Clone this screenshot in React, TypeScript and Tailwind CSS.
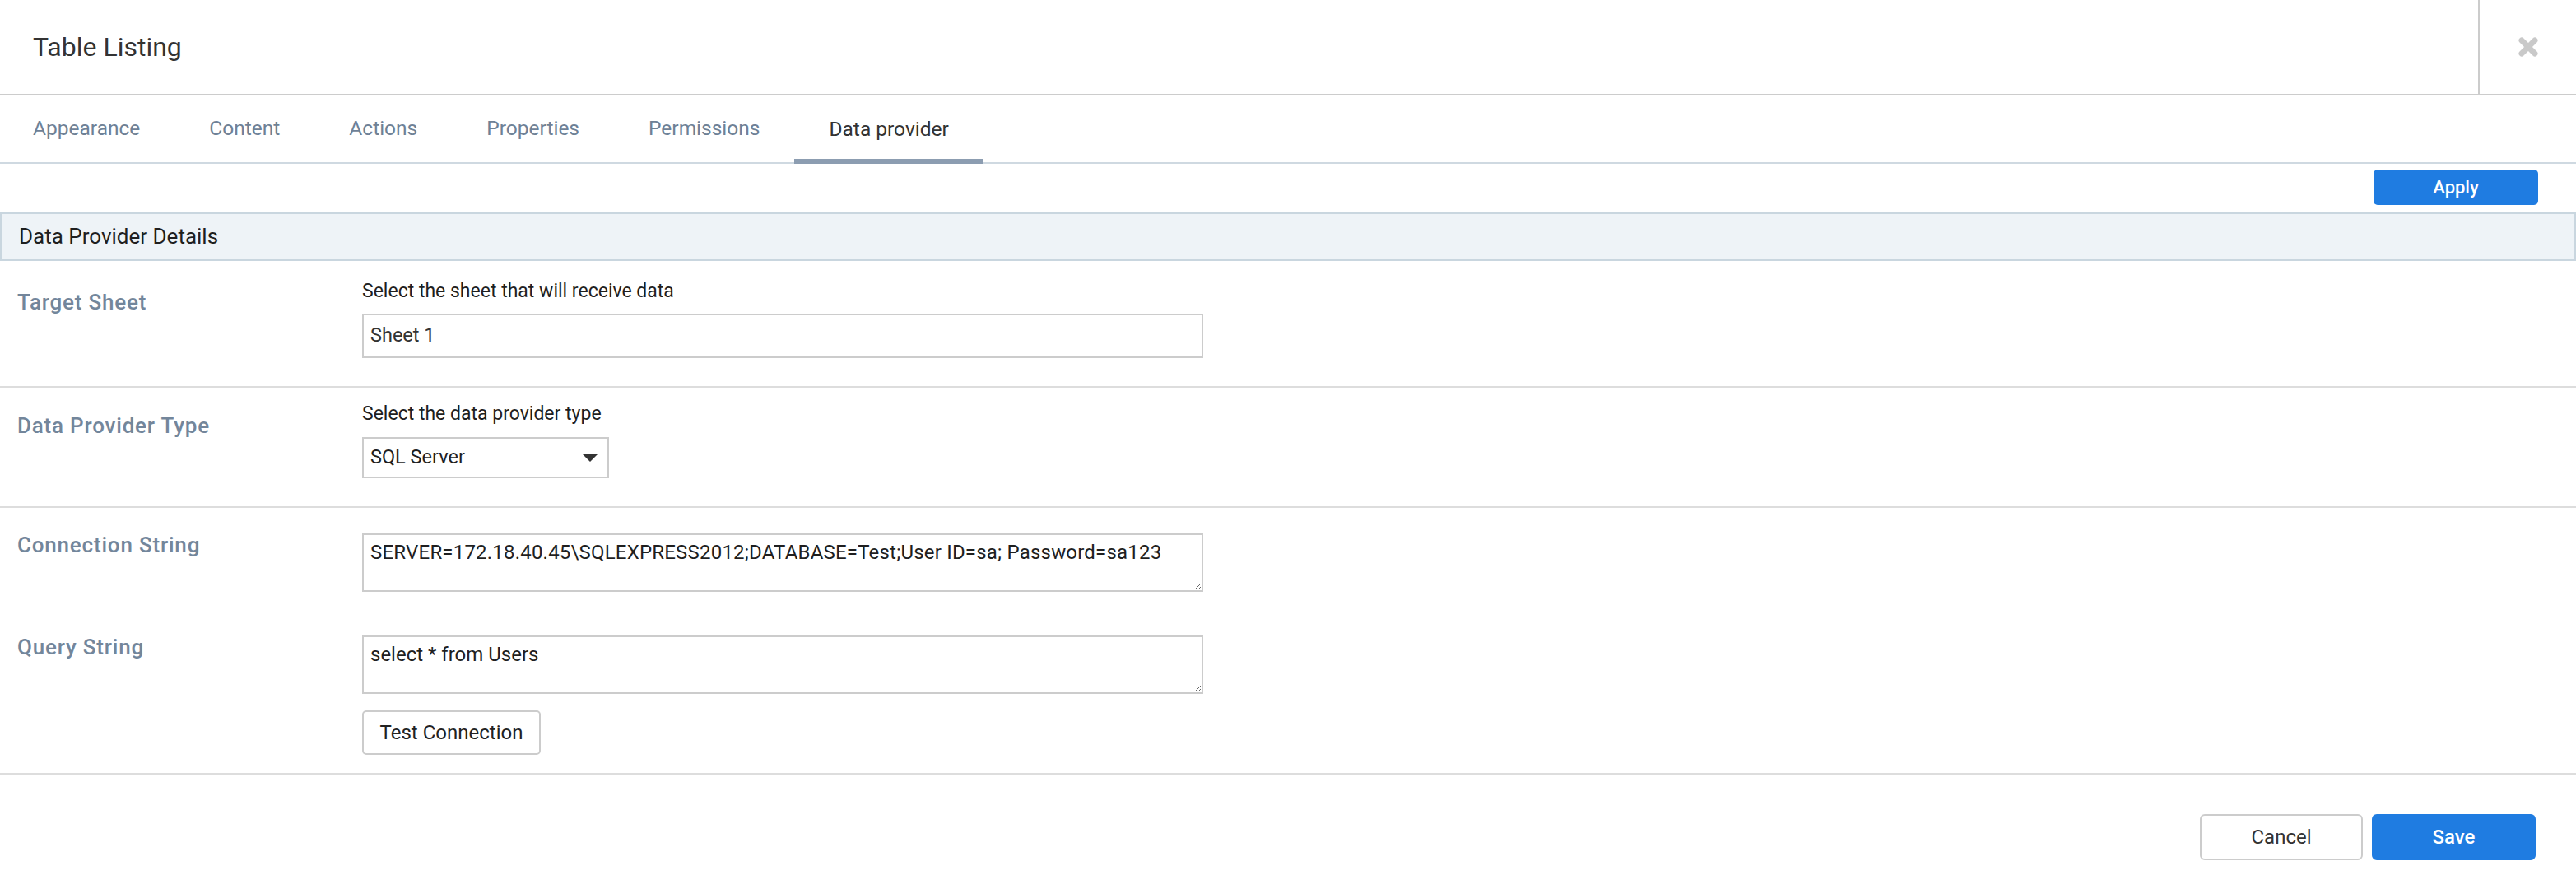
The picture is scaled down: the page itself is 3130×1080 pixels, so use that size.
import React from 'react';

const tabs = ['Appearance', 'Content', 'Actions', 'Properties', 'Permissions', 'Data provider'];

const Label: React.FC<{ text: string; className?: string }> = ({ text, className = '' }) => (
  <div className={`w-[440px] shrink-0 pl-[21px] text-[26px] leading-[28px] font-medium tracking-[0.8px] text-[#73869b] ${className}`}>
    {text}
  </div>
);

const Hint: React.FC<{ text: string }> = ({ text }) => (
  <div className="text-[23px] leading-[30px] text-[#1f1f1f]">{text}</div>
);

const CloseIcon = () => (
  <svg width="24" height="24" viewBox="0 0 24 24" aria-hidden="true">
    <path d="M4 4 L20 20 M20 4 L4 20" stroke="#c9c9c9" strokeWidth="7" strokeLinecap="round" />
  </svg>
);

const CaretDown = () => (
  <svg width="20" height="10" viewBox="0 0 20 10" aria-hidden="true">
    <path d="M0 0 L20 0 L10 10 Z" fill="#333333" />
  </svg>
);

export default function App() {
  return (
    <div className="w-full h-[1080px] bg-white font-['Roboto','Liberation_Sans',sans-serif] flex flex-col">
      {/* header */}
      <header className="h-[116px] shrink-0 flex border-b-2 border-[#cccccc]">
        <div className="flex-1 flex items-center pl-[40px] text-[32px] text-[#333333]">Table Listing</div>
        <div className="w-[119px] border-l-2 border-[#cccccc] flex items-center justify-center">
          <CloseIcon />
        </div>
      </header>

      {/* tabs */}
      <nav className="h-[83px] shrink-0 flex border-b-2 border-[#cfd9e1]">
        {tabs.map((t) => {
          const active = t === 'Data provider';
          return (
            <div
              key={t}
              className={`px-[42px] first:pl-[40px] flex items-center text-[24.5px] ${
                active ? 'text-[#333333] border-b-[6px] border-[#8c9db1] -mb-[2px] pt-[6px]' : 'text-[#6e8196]'
              }`}
            >
              {t}
            </div>
          );
        })}
      </nav>

      {/* apply bar */}
      <div className="h-[59px] shrink-0 flex justify-end items-start pr-[46px] pt-[7px]">
        <button className="w-[200px] h-[43px] rounded-[5px] bg-[#1f7ce1] text-white text-[22px] font-medium">
          Apply
        </button>
      </div>

      {/* section header */}
      <div className="h-[59px] shrink-0 flex items-center border-2 border-[#c9d6df] bg-[#eef3f7] pl-[21px] text-[26px] text-[#1f1f1f]">
        Data Provider Details
      </div>

      {/* target sheet */}
      <div className="flex items-start border-b-2 border-[#dddddd]">
        <Label text="Target Sheet" className="pt-[36px]" />
        <div className="pt-[22px] pb-[34px]">
          <Hint text="Select the sheet that will receive data" />
          <div className="mt-[12px] w-[1022px] h-[54px] border-2 border-[#cccccc] flex items-center pl-[8px] text-[23.5px] text-[#333333]">
            Sheet 1
          </div>
        </div>
      </div>

      {/* provider type */}
      <div className="flex items-start border-b-2 border-[#dddddd]">
        <Label text="Data Provider Type" className="pt-[32px]" />
        <div className="pt-[17px] pb-[34px]">
          <Hint text="Select the data provider type" />
          <div className="mt-[13px] w-[300px] h-[50px] border-2 border-[#cccccc] flex items-center justify-between pl-[8px] pr-[11px] text-[23.5px] text-[#1f1f1f]">
            <span>SQL Server</span>
            <CaretDown />
          </div>
        </div>
      </div>

      {/* connection / query */}
      <div className="flex flex-col pt-[31px] pb-[22px] border-b-2 border-[#dddddd]">
        <div className="flex items-start">
          <Label text="Connection String" />
          <textarea
            readOnly
            defaultValue="SERVER=172.18.40.45\SQLEXPRESS2012;DATABASE=Test;User ID=sa; Password=sa123"
            className="w-[1022px] h-[71px] border-2 border-[#cccccc] pl-[8px] pt-[6px] text-[24px] tracking-[0.2px] leading-[30px] text-[#1f1f1f] outline-none"
          />
        </div>
        <div className="flex items-start mt-[53px]">
          <Label text="Query String" />
          <div className="flex flex-col items-start">
            <textarea
              readOnly
              defaultValue="select * from Users"
              className="w-[1022px] h-[71px] border-2 border-[#cccccc] pl-[8px] pt-[6px] text-[24px] leading-[30px] text-[#1f1f1f] outline-none"
            />
            <button className="mt-[20px] w-[217px] h-[54px] border-2 border-[#cccccc] rounded-[5px] bg-white text-[24px] text-[#222222]">
              Test Connection
            </button>
          </div>
        </div>
      </div>

      {/* footer */}
      <div className="flex justify-end gap-[11px] pt-[48px] pr-[49px]">
        <button className="w-[198px] h-[56px] border-2 border-[#cccccc] rounded-[6px] bg-white text-[24px] text-[#333333]">
          Cancel
        </button>
        <button className="w-[199px] h-[56px] rounded-[6px] bg-[#1f7ce1] text-[24px] font-medium text-white">
          Save
        </button>
      </div>
    </div>
  );
}
